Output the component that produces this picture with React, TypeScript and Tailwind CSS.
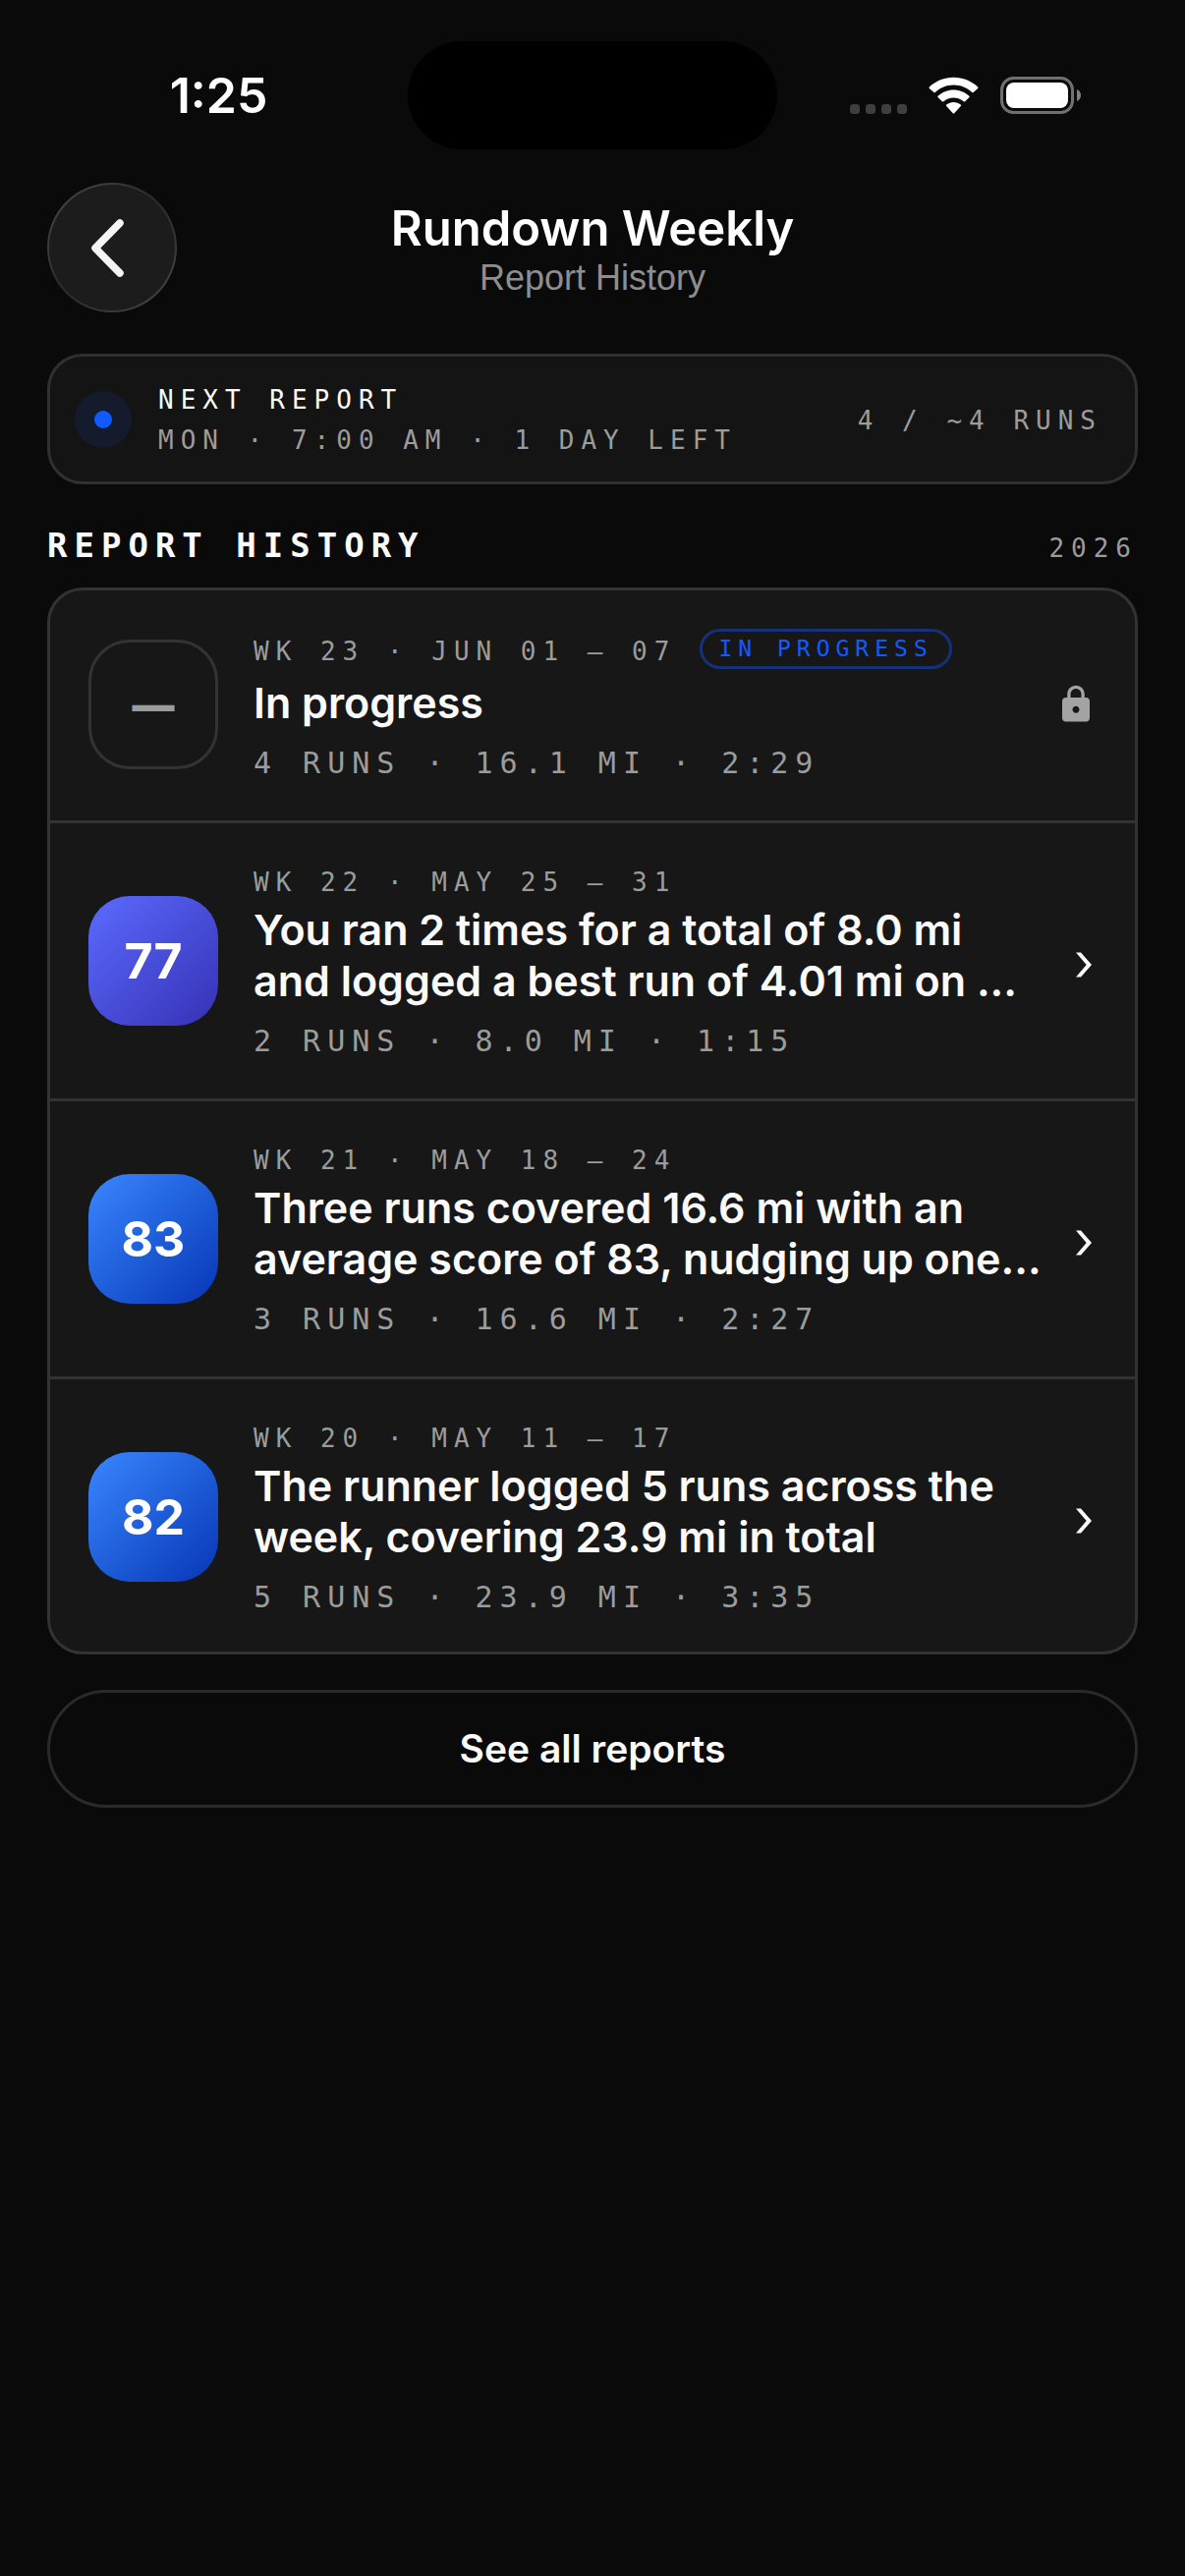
import { MdLock } from "react-icons/md";
import clsx from "clsx";

type Report = {
    week: string;
    title: string;
    stats: string;
    score?: number;
    tone?: "indigo" | "blue";
};

const reports: Report[] = [
    { week: "WK 23 · JUN 01 — 07", title: "In progress", stats: "4 RUNS · 16.1 MI · 2:29" },
    {
        week: "WK 22 · MAY 25 — 31",
        title: "You ran 2 times for a total of 8.0 mi\nand logged a best run of 4.01 mi on ...",
        stats: "2 RUNS · 8.0 MI · 1:15",
        score: 77,
        tone: "indigo",
    },
    {
        week: "WK 21 · MAY 18 — 24",
        title: "Three runs covered 16.6 mi with an\naverage score of 83, nudging up one...",
        stats: "3 RUNS · 16.6 MI · 2:27",
        score: 83,
        tone: "blue",
    },
    {
        week: "WK 20 · MAY 11 — 17",
        title: "The runner logged 5 runs across the\nweek, covering 23.9 mi in total",
        stats: "5 RUNS · 23.9 MI · 3:35",
        score: 82,
        tone: "blue",
    },
];

const META = "font-['DejaVu_Sans_Mono',monospace] text-[26px] leading-9 tracking-[7px] whitespace-nowrap";

function StatusBar() {
    return (
        <div className="grid grid-cols-[1fr_376px_1fr] items-center pt-[42px]">
            <div className="pl-[30px] text-center text-[50px] leading-[60px] font-semibold text-white">1:25</div>
            <div className="h-[110px] rounded-full bg-black" />
            <div className="flex items-center justify-end pr-[106px]">
                <svg className="mr-[22px] h-[38px] w-[58px]" viewBox="0 0 58 38" fill="#3f3f3f">
                    <rect x="0" y="28" width="10" height="10" rx="3.5" />
                    <rect x="16" y="28" width="10" height="10" rx="3.5" />
                    <rect x="32" y="28" width="10" height="10" rx="3.5" />
                    <rect x="48" y="28" width="10" height="10" rx="3.5" />
                </svg>
                <svg className="mr-[22px] h-[38px] w-[51px]" viewBox="0 0 51 38" fill="#fff">
                    <path d="M25.5 8.6C32.5 8.6 39.1 11.3 44.2 16C44.6 16.4 45.2 16.4 45.6 16L50.2 11.9C50.6 11.5 50.6 10.9 50.2 10.5C43.6 4.3 34.9 0.7 25.5 0.7C16.1 0.7 7.4 4.3 0.8 10.5C0.4 10.9 0.4 11.5 0.8 11.9L5.4 16C5.8 16.4 6.4 16.4 6.8 16C11.9 11.3 18.5 8.6 25.5 8.6Z" />
                    <path d="M25.5 21.4C29.4 21.4 33 22.8 35.8 25.3C36.2 25.7 36.8 25.7 37.2 25.3L41.5 21.1C41.9 20.7 41.9 20.1 41.5 19.7C37.2 15.7 31.6 13.4 25.5 13.4C19.4 13.4 13.8 15.7 9.5 19.7C9.1 20.1 9.1 20.7 9.5 21.1L13.8 25.3C14.2 25.7 14.8 25.7 15.2 25.3C18 22.8 21.6 21.4 25.5 21.4Z" />
                    <path d="M32.8 29.9C33.2 29.5 33.2 28.9 32.7 28.5C30.7 26.9 28.2 26 25.5 26C22.8 26 20.3 26.9 18.3 28.5C17.8 28.9 17.8 29.5 18.2 29.9L24.8 37.2C25.2 37.6 25.8 37.6 26.2 37.2Z" />
                </svg>
                <svg className="h-[38px] w-[82px]" viewBox="0 0 82 38">
                    <rect x="1.5" y="1.5" width="72" height="35" rx="12" fill="none" stroke="#707070" strokeWidth="3" />
                    <rect x="6" y="6" width="63" height="26" rx="8" fill="#fff" />
                    <path d="M78 13C80.5 14 82 16.3 82 19C82 21.7 80.5 24 78 25Z" fill="#808080" />
                </svg>
            </div>
        </div>
    );
}

function Header() {
    return (
        <header className="mt-[34px] grid grid-cols-[132px_1fr_132px] items-center">
            <button
                type="button"
                aria-label="Back"
                className="flex size-[132px] items-center justify-center rounded-full bg-linear-135 from-[#4a4a4a] via-[#2a2a2a] to-[#4a4a4a] p-[2px]"
            >
                <span className="flex size-full items-center justify-center rounded-full bg-[#1c1c1c]">
                    <svg className="size-[60px]" viewBox="0 0 60 60" fill="none" stroke="#f4f4f4" strokeWidth="7.5" strokeLinecap="round" strokeLinejoin="round">
                        <path d="M38 5L13 30.5L38 56" />
                    </svg>
                </span>
            </button>
            <div className="pt-0.5 text-center">
                <h1 className="text-[49px] leading-[60px] font-semibold text-white">Rundown Weekly</h1>
                <p className="font-['Liberation_Sans',sans-serif] text-[36px] leading-10 text-[#8e8e8e]">Report History</p>
            </div>
        </header>
    );
}

function NextReport() {
    return (
        <section className="mt-[42px] flex items-center rounded-[36px] border-[3px] border-[#303030] bg-[#141414] py-[21px] pr-[33px] pl-[25px]">
            <div className="flex size-[58px] items-center justify-center rounded-full bg-[#141b2d]">
                <div className="size-[18px] rounded-full bg-[#0f5bff]" />
            </div>
            <div className={clsx(META, "ml-[27px] flex-1 pt-[3px]")}>
                <p className="leading-[41px] text-[#fafafa]">NEXT REPORT</p>
                <p className="leading-[41px] text-[#9c9c9c]">MON · 7:00 AM · 1 DAY LEFT</p>
            </div>
            <p className={clsx(META, "pt-[3px] text-[#9c9c9c]")}>4 / ~4 RUNS</p>
        </section>
    );
}

function ScoreTile({ score, tone }: { score?: number; tone?: "indigo" | "blue" }) {
    return (
        <div
            className={clsx(
                "flex size-[132px] shrink-0 items-center justify-center rounded-[42px] leading-[60px]",
                !tone && "border-[3px] border-[#333333] text-[43px] font-black text-[#9c9c9c]",
                tone && "text-[50px] font-bold text-white",
                tone === "indigo" && "bg-linear-135 from-[#5b6bff] to-[#3730b5]",
                tone === "blue" && "bg-linear-135 from-[#3b87ff] to-[#0a34b5]"
            )}
        >
            {score ?? "—"}
        </div>
    );
}

function ReportRow({ report }: { report: Report }) {
    const locked = report.score === undefined;

    return (
        <li className="border-b-[3px] border-[#333333] last:-mb-[3px] last:border-b-0">
            <a href="#" className={clsx("flex items-center px-[39px] pb-[38px]", locked ? "pt-[35px]" : "pt-[38px]")}>
                <ScoreTile score={report.score} tone={report.tone} />
                <div className="ml-9 flex-1 pt-1">
                    <div className={clsx("flex items-end", locked ? "mb-2" : "mb-1")}>
                        <span className={clsx(META, "text-[#9c9c9c]")}>{report.week}</span>
                        {locked && (
                            <span className="ml-6 rounded-full border-[3px] border-[#15317a] px-4 font-['DejaVu_Sans_Mono',monospace] text-[23px] leading-[35px] tracking-[6px] text-[#0f5bff]">
                                IN PROGRESS
                            </span>
                        )}
                    </div>
                    <h3 className="text-[43px] leading-[52px] font-semibold whitespace-pre text-[#fafafa]">{report.title}</h3>
                    <p className="mt-4 font-['DejaVu_Sans_Mono',monospace] text-[30px] leading-10 tracking-[7px] text-[#9c9c9c]">{report.stats}</p>
                </div>
                {locked ? (
                    <MdLock className="size-[42px] shrink-0 text-[#a3a3a3]" />
                ) : (
                    <svg className="h-[34px] w-[22px] shrink-0" viewBox="0 0 22 34" fill="#fafafa">
                        <path d="M1 8.5H6L17 21L6 33.5H1L11.7 21Z" />
                    </svg>
                )}
            </a>
        </li>
    );
}

export default function App() {
    return (
        <main className="min-h-screen bg-[#0a0a0a] font-[Inter,sans-serif]">
            <StatusBar />
            <div className="px-12">
                <Header />
                <NextReport />
                <div className="mt-[41px] mb-[22px] flex items-end justify-between">
                    <h2 className="font-['DejaVu_Sans_Mono',monospace] text-[34px] leading-[42px] font-bold tracking-[7px] text-[#fafafa]">REPORT HISTORY</h2>
                    <span className={clsx(META, "text-[#9c9c9c]")}>2026</span>
                </div>
                <ul className="overflow-hidden rounded-[36px] border-[3px] border-[#333333] bg-[#171717]">
                    {reports.map((report) => (
                        <ReportRow key={report.week} report={report} />
                    ))}
                </ul>
                <button type="button" className="mt-9 h-[120px] w-full rounded-full border-[3px] border-[#2a2a2a] text-[39px] leading-[48px] font-semibold text-[#fafafa]">
                    See all reports
                </button>
            </div>
        </main>
    );
}
